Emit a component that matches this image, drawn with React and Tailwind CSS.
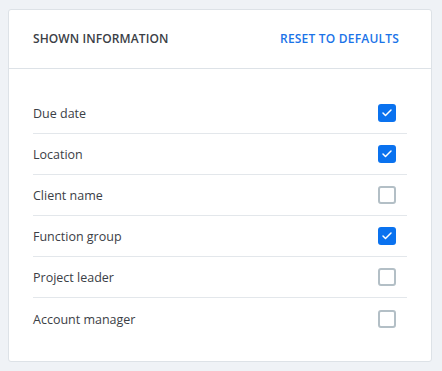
import { Check } from 'lucide-react'

const fields = [
    { label: 'Due date', checked: true },
    { label: 'Location', checked: true },
    { label: 'Client name', checked: false },
    { label: 'Function group', checked: true },
    { label: 'Project leader', checked: false },
    { label: 'Account manager', checked: false },
]

function Checkbox({ checked }) {
    if (checked) {
        return (
            <span className='w-[18px] h-[18px] rounded-[3px] bg-[#0a72ef] flex items-center justify-center'>
                <Check size={12} strokeWidth={3} className='text-white' />
            </span>
        )
    }
    return <span className='w-[18px] h-[18px] rounded-[3px] border-2 border-[#b3bfc6] bg-white'></span>
}

export default function App() {
    return (
        <div className="w-[442px] h-[371px] bg-[#eff2f6] pt-[9px] pl-2 pr-[10px]" style={{ fontFamily: '"Open Sans", "Noto Sans", sans-serif' }}>
            <div className="bg-white border border-[#dde2e7] rounded-[3px] h-[353px] flex flex-col">
                {/* Header */}
                <div className="h-[59px] border-b border-[#dde2e7] pl-6 pr-8 flex items-center justify-between">
                    <span className='text-[12px] font-semibold text-[#3b4046] tracking-[0.1px]'>SHOWN INFORMATION</span>
                    <button className='text-[12px] font-semibold text-[#1a73e8] tracking-[0.2px] cursor-pointer'>RESET TO DEFAULTS</button>
                </div>

                {/* Fields */}
                <div className="px-6 pt-6">
                    {fields.map((f, i) => (
                        <div key={f.label} className={`h-[41px] flex items-center justify-between pr-[11px] ${i < fields.length - 1 ? 'border-b border-[#e3e7eb]' : ''}`}>
                            <span className='text-[12.5px] text-[#3b4046] mt-[3px]'>{f.label}</span>
                            <Checkbox checked={f.checked} />
                        </div>
                    ))}
                </div>
            </div>
        </div>
    )
}
